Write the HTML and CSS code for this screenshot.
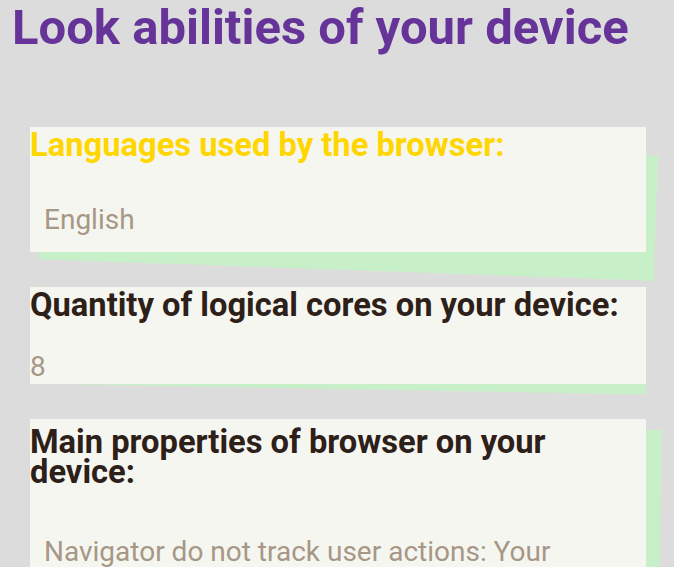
FILE: index.html
```html
<!DOCTYPE html>
<html lang="en">
<head>
<meta charset="utf-8">
<title>Look abilities of your device</title>
<link rel="stylesheet" href="styles.css">
</head>
<body>
<h1 class="title">Look abilities of your device</h1>
<main class="cards">
  <section class="card card--tilt">
    <h2 class="card__title card__title--accent">Languages used by the browser:</h2>
    <p class="card__value card__value--inset card__value--first">English</p>
  </section>
  <section class="card card--skew">
    <h2 class="card__title card__title--mid">Quantity of logical cores on your device:</h2>
    <p class="card__value card__value--flush">8</p>
  </section>
  <section class="card card--shift">
    <h2 class="card__title card__title--low">Main properties of browser on your device:</h2>
    <p class="card__value card__value--inset card__value--last">Navigator do not track user actions: Your browser does not send a request to not track you.</p>
    <p class="card__value card__value--inset">Cookies are enabled: true</p>
  </section>
</main>
</body>
</html>
```
FILE: styles.css
```css
html, body {
  margin: 0;
  padding: 0;
}
body {
  background: #dcdcdc;
  font-family: Roboto, "Noto Sans", sans-serif;
  overflow: hidden;
}
.title {
  margin: 0;
  font-size: 49px;
  line-height: 56px;
  font-weight: 700;
  color: #663399;
  padding-left: 12px;
  white-space: nowrap;
}
.cards {
  display: flex;
  flex-direction: column;
  gap: 35px;
  padding: 71px 28px 0 30px;
  width: 616px;
}
.card {
  position: relative;
  isolation: isolate;
}
.card::before,
.card::after {
  content: "";
  position: absolute;
  inset: 0;
  z-index: -1;
}
.card::before {
  background: #c8f0c8;
}
.card::after {
  background: #f6f6f0;
}
.card--tilt::before {
  transform: translate(10px, 18px) rotate(2deg);
}
.card--skew::before {
  transform: translateY(5px) skewY(1deg);
}
.card--shift::before {
  transform: translate(14px, 8px) rotate(0.6deg);
}
.card__title {
  margin: 0;
  padding-top: 3px;
  font-size: 32.7px;
  line-height: 30px;
  font-weight: 700;
  color: #2d2019;
}
.card__title--accent {
  color: #ffd600;
}
.card__title--low {
  padding-top: 8px;
}
.card__value {
  margin: 0;
  font-size: 28px;
  line-height: 30px;
  color: #a69786;
}
.card__value--inset {
  padding: 0 14px 17px;
}
.card__value--first {
  padding-top: 45px;
}
.card__value--last {
  padding-top: 50px;
}
.card__value--flush {
  padding: 32px 0 2px;
}
```
